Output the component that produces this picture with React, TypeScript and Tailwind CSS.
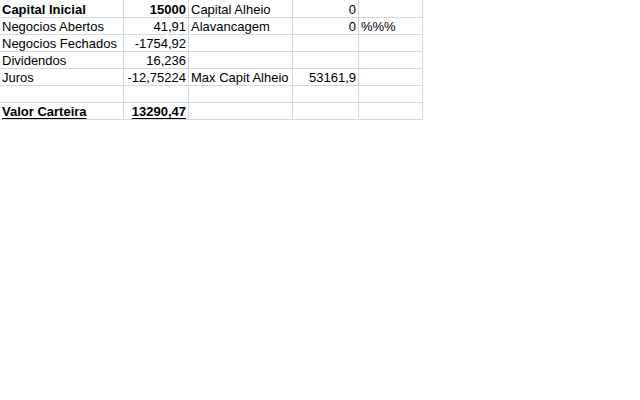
import React from 'react';

type Cell = {
  v?: string;
  right?: boolean;
  bold?: boolean;
  under?: boolean;
};

const widths = ['w-[124px]', 'w-[65px]', 'w-[104px]', 'w-[66px]', 'w-[64px]'];

const rows: Cell[][] = [
  [
    { v: 'Capital Inicial', bold: true },
    { v: '15000', bold: true, right: true },
    { v: 'Capital Alheio' },
    { v: '0', right: true },
    {},
  ],
  [
    { v: 'Negocios Abertos' },
    { v: '41,91', right: true },
    { v: 'Alavancagem' },
    { v: '0', right: true },
    { v: '%%%' },
  ],
  [{ v: 'Negocios Fechados' }, { v: '-1754,92', right: true }, {}, {}, {}],
  [{ v: 'Dividendos' }, { v: '16,236', right: true }, {}, {}, {}],
  [
    { v: 'Juros' },
    { v: '-12,75224', right: true },
    { v: 'Max Capit Alheio' },
    { v: '53161,9', right: true },
    {},
  ],
  [{}, {}, {}, {}, {}],
  [
    { v: 'Valor Carteira', bold: true, under: true },
    { v: '13290,47', bold: true, under: true, right: true },
    {},
    {},
    {},
  ],
];

const App = () => {
  return (
    <div className="w-[640px] h-[400px] bg-white overflow-hidden text-black text-[13px] leading-[15px] font-['Liberation_Sans',Arial,sans-serif]">
      <div className="flex flex-col">
        {rows.map((row, ri) => (
          <div key={ri} className={`flex ${ri === 0 ? 'h-[18px]' : 'h-[17px]'}`}>
            {row.map((c, ci) => (
              <div
                key={ci}
                className={`${widths[ci]} ${ci === 0 ? '' : ''} shrink-0 border-r border-b border-[#d0d7e5] flex ${
                  c.right ? 'justify-end pr-[2px]' : 'justify-start pl-[2px]'
                } ${ri === 0 ? 'pt-[2px]' : 'pt-px'} whitespace-nowrap overflow-visible`}
              >
                {c.v && (
                  <span
                    className={`${c.bold ? 'font-bold' : ''} ${
                      c.under ? 'underline decoration-1 underline-offset-2' : ''
                    }`}
                  >
                    {c.v}
                  </span>
                )}
              </div>
            ))}
          </div>
        ))}
      </div>
    </div>
  );
};

export default App;
